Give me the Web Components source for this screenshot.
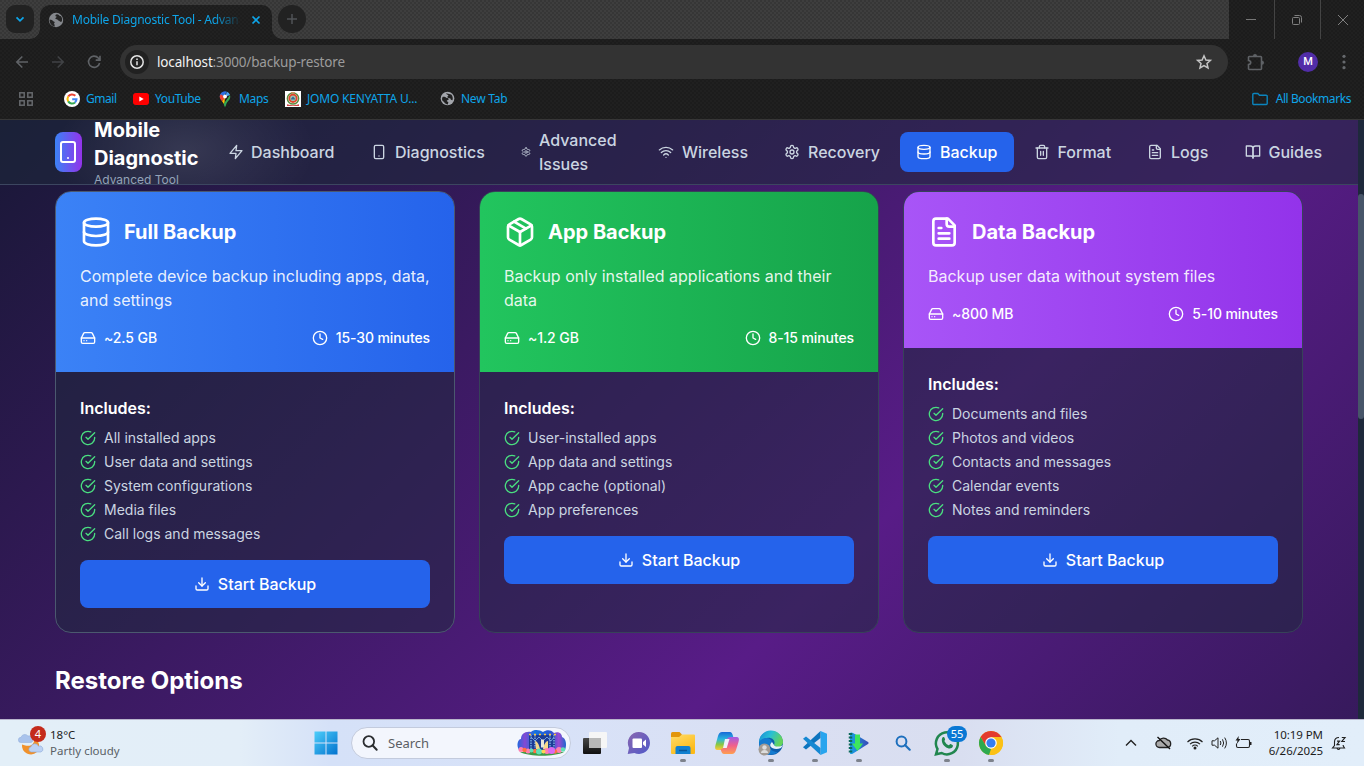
<!DOCTYPE html>
<html lang="en">
<head>
<meta charset="utf-8">
<title>Mobile Diagnostic Tool - Advanced</title>
<style>
html,body{margin:0;height:100%;overflow:hidden}
body{display:flex;flex-direction:column;width:1364px;height:766px;background:#1f1f1f;font-family:"Noto Sans","Open Sans",sans-serif}
</style>
</head>
<body>
<browser-chrome></browser-chrome>
<app-page></app-page>
<task-bar></task-bar>
<script>
const define = (name, css, html) => customElements.define(name, class extends HTMLElement {
  constructor() {
    super();
    this.attachShadow({ mode: 'open' }).innerHTML = `<style>*{box-sizing:border-box}${css}</style>${typeof html === 'function' ? html(this) : html}`;
  }
});

/* ---------- line icons ---------- */
const LINE = {
  zap: '<polygon points="13 2 3 14 12 14 11 22 21 10 12 10 13 2"/>',
  phone: '<rect x="5" y="2" width="14" height="20" rx="2"/><path d="M12 18h.01"/>',
  gear: '<path d="M12.22 2h-.44a2 2 0 0 0-2 2v.18a2 2 0 0 1-1 1.73l-.43.25a2 2 0 0 1-2 0l-.15-.08a2 2 0 0 0-2.73.73l-.22.38a2 2 0 0 0 .73 2.73l.15.1a2 2 0 0 1 1 1.72v.51a2 2 0 0 1-1 1.74l-.15.09a2 2 0 0 0-.73 2.73l.22.38a2 2 0 0 0 2.73.73l.15-.08a2 2 0 0 1 2 0l.43.25a2 2 0 0 1 1 1.73V20a2 2 0 0 0 2 2h.44a2 2 0 0 0 2-2v-.18a2 2 0 0 1 1-1.73l.43-.25a2 2 0 0 1 2 0l.15.08a2 2 0 0 0 2.73-.73l.22-.39a2 2 0 0 0-.73-2.73l-.15-.08a2 2 0 0 1-1-1.74v-.5a2 2 0 0 1 1-1.74l.15-.09a2 2 0 0 0 .73-2.73l-.22-.38a2 2 0 0 0-2.73-.73l-.15.08a2 2 0 0 1-2 0l-.43-.25a2 2 0 0 1-1-1.73V4a2 2 0 0 0-2-2z"/><circle cx="12" cy="12" r="3"/>',
  wifi: '<path d="M12 20h.01"/><path d="M2 8.82a15 15 0 0 1 20 0"/><path d="M5 12.859a10 10 0 0 1 14 0"/><path d="M8.5 16.429a5 5 0 0 1 7 0"/>',
  database: '<ellipse cx="12" cy="5" rx="9" ry="3"/><path d="M3 5V19A9 3 0 0 0 21 19V5"/><path d="M3 12A9 3 0 0 0 21 12"/>',
  trash: '<path d="M3 6h18"/><path d="M19 6v14c0 1-1 2-2 2H7c-1 0-2-1-2-2V6"/><path d="M8 6V4c0-1 1-2 2-2h4c1 0 2 1 2 2v2"/><path d="M10 11v6M14 11v6"/>',
  file: '<path d="M15 2H6a2 2 0 0 0-2 2v16a2 2 0 0 0 2 2h12a2 2 0 0 0 2-2V7Z"/><path d="M14 2v4a2 2 0 0 0 2 2h4"/><path d="M10 9H8M16 13H8M16 17H8"/>',
  book: '<path d="M2 3h6a4 4 0 0 1 4 4v14a3 3 0 0 0-3-3H2z"/><path d="M22 3h-6a4 4 0 0 0-4 4v14a3 3 0 0 1 3-3h7z"/>',
  box: '<path d="m7.5 4.27 9 5.15"/><path d="M21 8a2 2 0 0 0-1-1.73l-7-4a2 2 0 0 0-2 0l-7 4A2 2 0 0 0 3 8v8a2 2 0 0 0 1 1.73l7 4a2 2 0 0 0 2 0l7-4A2 2 0 0 0 21 16Z"/><path d="m3.3 7 8.7 5 8.7-5"/><path d="M12 22V12"/>',
  drive: '<line x1="22" x2="2" y1="12" y2="12"/><path d="M5.45 5.11 2 12v6a2 2 0 0 0 2 2h16a2 2 0 0 0 2-2v-6l-3.45-6.89A2 2 0 0 0 16.76 4H7.24a2 2 0 0 0-1.79 1.11z"/><path d="M6 16h.01M10 16h.01"/>',
  clock: '<circle cx="12" cy="12" r="10"/><polyline points="12 6 12 12 16 14"/>',
  check: '<path d="M22 11.08V12a10 10 0 1 1-5.93-9.14"/><path d="m9 11 3 3L22 4"/>',
  download: '<path d="M21 15v4a2 2 0 0 1-2 2H5a2 2 0 0 1-2-2v-4"/><polyline points="7 10 12 15 17 10"/><line x1="12" x2="12" y1="15" y2="3"/>',
};
define('line-icon', ':host{display:block;flex:none;line-height:0}svg{display:block}',
  el => { const s = el.getAttribute('size') || 16;
    return `<svg width="${s}" height="${s}" viewBox="0 0 24 24" fill="none" stroke="currentColor" stroke-width="2" stroke-linecap="round" stroke-linejoin="round">${LINE[el.getAttribute('name')]}</svg>`; });

/* ---------- colour glyphs: [width, height, viewBox, content] ---------- */
const GLYPH = {
  chevron: [12, 12, '0 0 12 12', '<path d="M2.5 4.3 6 7.8l3.500-3.500" fill="none" stroke="#0ea5e9" stroke-width="1.8"/>'],
  globe: [16, 16, '0 0 16 16', '<circle cx="8" cy="8" r="7.200" fill="#85888d"/><path d="M1.500 7.500c2 .2 3 .8 3.700 1.700 1 .2 1.600.6 1.500 1.500-.8.400-.7 1-.2 1.700l.3 2.200C3.500 14 1.400 11 1.500 7.500zM7.500 3c-.3 1 .3 1.500 1.200 1.600-.2 1.100-1.200 1-1.400 2.100.8.700 2 .300 2.600 1.300.500.800 1.700.500 2 1.400.3.800 1.500.3 2-.2.500-1.800.1-4-1.200-5.200-.9.300-1.400-.1-1.800-.9C9.700 2 8.300 2 7.500 3z" fill="#242424"/>'],
  globeLight: [15, 15, '0 0 16 16', '<circle cx="8" cy="8" r="7.300" fill="#a3a6ac"/><path d="M3 6.200c2-.1 2.700.1 3.600 1 1.200.2 2.200.3 2.700 1.300-.1 1-.9 1.400-1.900 1.400-.3 1.200.6 1.600 1.500 1.900l-.5 2.500C4.800 14 5 11.800 3.200 11 1.800 9.500 1.900 7.500 3 6.200zM6.500 2.500 12 3.600c1.600 1.500 2 4.300 1.300 6.200-1.500-.1-2.300-.8-2.300-2-1.500-.2-3-.4-3.300-1.400.1-.9 1.300-1 1.200-1.900C7.900 4 7 4 6.500 2.500z" fill="#202020"/>'],
  close: [10, 10, '0 0 10 10', '<path d="m1.500 1.500 7 7m0-7-7 7" stroke="#0ea5e9" stroke-width="1.700"/>'],
  plus: [12, 12, '0 0 12 12', '<path d="M6 1v10M1 6h10" stroke="#505357" stroke-width="1.500"/>'],
  back: [14, 14, '0 0 14 14', '<path d="M13 7H2m5.300-5.500L1.800 7l5.500 5.500" fill="none" stroke="#5f6266" stroke-width="1.600"/>'],
  forward: [14, 14, '0 0 14 14', '<path d="M1 7h11M6.700 1.500 12.200 7l-5.500 5.500" fill="none" stroke="#404245" stroke-width="1.600"/>'],
  reload: [14, 14, '0 0 14 14', '<path d="M12.600 8A5.600 5.600 0 1 1 11.300 3L13 4.800M13 .8v4.300H8.700" fill="none" stroke="#5f6266" stroke-width="1.600"/>'],
  info: [16, 16, '0 0 16 16', '<circle cx="8" cy="8" r="6.200" fill="none" stroke="#e3e3e3" stroke-width="1.500"/><path d="M8 7.200v4M8 4.500v1.400" stroke="#e3e3e3" stroke-width="1.500"/>'],
  star: [16, 16, '0 0 16 16', '<path d="m8 1.800 1.900 4.200 4.500.4-3.400 3 1 4.500-4-2.400-4 2.400 1-4.500-3.400-3 4.500-.4z" fill="none" stroke="#c4c4c4" stroke-width="1.500"/>'],
  puzzle: [17, 17, '0 0 17 17', '<path d="M2.300 2.500h4.200M2.300 2.500q-.8 0-.8.800v3.200c3 .4 3 3.600 0 4v4q0 1 1 1h11q1 0 1-1v-11q0-1-1-1H2.300" fill="none" stroke="#5f6266" stroke-width="1.600"/><path d="M6 2a2 2 0 0 1 4 0zM15 6.700a2 2 0 0 1 0 4z" fill="#5f6266"/>'],
  dots: [4, 16, '0 0 4 16', '<g fill="#66696d"><circle cx="2" cy="2.300" r="1.600"/><circle cx="2" cy="8" r="1.600"/><circle cx="2" cy="13.700" r="1.600"/></g>'],
  min: [10, 10, '0 0 10 10', '<path d="M0 4.500h10" stroke="#777" />'],
  max: [10, 10, '0 0 10 10', '<rect x=".5" y="2.500" width="7" height="7" rx="1" fill="none" stroke="#808080"/><path d="M2.500.5h5a2 2 0 0 1 2 2v5" fill="none" stroke="#808080"/>'],
  x: [10, 10, '0 0 10 10', '<path d="m0 0 10 10m0-10L0 10" stroke="#808080"/>'],
  apps: [14, 14, '0 0 14 14', '<g fill="none" stroke="#66696d" stroke-width="1.500"><rect x=".8" y=".8" width="4.400" height="4.400"/><rect x="8.800" y=".8" width="4.400" height="4.400"/><rect x=".8" y="8.800" width="4.400" height="4.400"/><rect x="8.800" y="8.800" width="4.400" height="4.400"/></g>'],
  google: [16, 16, '0 0 16 16', '<circle cx="8" cy="8" r="8" fill="#fff"/><g fill="none" stroke-width="2"><path d="M4.200 5.600A4.500 4.500 0 0 1 11.300 4.800" stroke="#ea4335"/><path d="M4.200 5.600a4.600 4.600 0 0 0 0 4.800" stroke="#fbbc05"/><path d="M4.200 10.400a4.500 4.500 0 0 0 6.800 1" stroke="#34a853"/><path d="M11 11.400a4.400 4.400 0 0 0 1.500-3.200H8.200" stroke="#4285f4"/></g>'],
  youtube: [16, 12, '0 0 16 12', '<rect width="16" height="12" rx="3" fill="#f00"/><path d="m6.300 3.500 4.400 2.500-4.400 2.500z" fill="#fff"/>'],
  maps: [12, 16, '0 0 12 16', '<path d="M6 .3A5.300 5.300 0 0 0 .7 5.600L3 7.500 8 .7A5 5 0 0 0 6 .3z" fill="#2a6fe3"/><path d="M8 .7a5.300 5.300 0 0 1 3 3.200L6 6z" fill="#4aa3f5"/><path d="M.7 5.600C.8 8 2 9 3.100 10.500L6 6.500 2 3.200q-1.200 1-1.300 2.400z" fill="#ea4335"/><path d="M6 6 3.100 10.500C4 11.700 5 12.500 5.400 14z" fill="#fbbc04"/><path d="M11 3.900c1 4-1.500 5.500-2.900 7.500C7 13 6.800 15.800 6 15.800s-.7-1.500-1.300-3z" fill="#34a853"/><circle cx="6" cy="5.500" r="1.900" fill="#fff"/>'],
  jomo: [16, 16, '0 0 16 16', '<path fill="#fff" d="M0 0h16v16H0z"/><circle cx="8" cy="7.500" r="5.600" fill="none" stroke="#5c8a3c" stroke-width="1.500"/><circle cx="8" cy="7.300" r="3.700" fill="#9ec3b0" stroke="#e0452c" stroke-width="1.800"/><path d="M6 8.500h4v-1L8 5.500l-2 2z" fill="#356b95"/><path d="M2 13.300q6 2 12 0v1.700H2z" fill="#c44"/><path d="M6 1h4v1.500H6z" fill="#c96"/>'],
  folder: [16, 14, '0 0 16 14', '<path d="M.8 2.500A1 1 0 0 1 1.800 1.500h4l1.700 1.700h6.700a1 1 0 0 1 1 1v7.300a1 1 0 0 1-1 1H1.800a1 1 0 0 1-1-1z" fill="none" stroke="#0b84bd" stroke-width="1.400"/>'],
  weather: [26, 26, '0 0 26 26', '<path d="M4 14.500a9 9 0 0 0 15 7.500 9 9 0 0 0-3-14c1 6-3 10-12 6.500z" fill="#f0912b"/><path d="M3 12.500a2.600 2.600 0 0 1 0-5.200A4 4 0 0 1 10 6a3 3 0 0 1 4 3 2 2 0 0 1-1 3.500z" fill="#a9c3ec" stroke="#8eabd9" stroke-width=".5"/><path d="M13 22a2.700 2.700 0 0 1 0-5.300 4 4 0 0 1 7.500-.5 3 3 0 0 1 2.500 5.800z" fill="#bcd2f4" stroke="#8eabd9" stroke-width=".6"/>'],
  windows: [24, 24, '0 0 24 24', '<defs><linearGradient id="w" gradientUnits="userSpaceOnUse" x2="24" y2="24"><stop stop-color="#4fd0fb"/><stop offset="1" stop-color="#0070cd"/></linearGradient></defs><path d="M.5.5h11v11H.5zm12 0h11v11h-11zm-12 12h11v11H.5zm12 0h11v11h-11z" fill="url(#w)"/>'],
  search: [16, 16, '0 0 16 16', '<circle cx="6.800" cy="6.500" r="5.300" fill="none" stroke="#2b2d30" stroke-width="1.800"/><path d="m10.700 10.500 4 4.300" stroke="#2b2d30" stroke-width="2" stroke-linecap="round"/>'],
  party: [50, 26, '0 0 50 26', '<defs><linearGradient id="p"><stop stop-color="#2368df"/><stop offset=".15" stop-color="#8349d3"/><stop offset=".35" stop-color="#1672df"/><stop offset=".7" stop-color="#2c55d2"/><stop offset=".85" stop-color="#9a4bd3"/><stop offset="1" stop-color="#1c65ce"/></linearGradient></defs><path d="M2 20C-1 15 1 9 4 9 4 4 8 1 14 2c3-3 9-2 12 0 4-3 9-2 11 1 5-2 8 1 8 4 4 1 5 8 3 13z" fill="url(#p)"/><path d="M12 5h26v15H12z" fill="#1d3c95"/><path d="M14 5v15M18 5v13M33 5v13M37 5v15" stroke="#8fc3f5" stroke-width="1.200" stroke-dasharray="1.500 1"/><path d="m14 7 4 4 4-4 4 4 4-4 4 4 3-4" stroke="#7fb0ee" fill="none" stroke-width=".8"/><path d="M12 4.500h2m3 0h2m3 0h2m3 0h2m3 0h2m3 0h2" stroke="#ffc93c" stroke-width="1.600"/><path d="M18 11c2 0 4 3 5 8h-4zm13 0c-2 0-4 3-5 8h5z" fill="#f6d98a"/><path d="M24 9.500h3v8h-3z" fill="#e8e6da"/><path d="M3 22c10 5 34 5 44 0z" fill="#3d9b46"/><g fill="#ff7eb0"><circle cx="4" cy="19.500" r="2.500"/><circle cx="11" cy="21" r="2.500"/><circle cx="30" cy="21" r="3"/><circle cx="42" cy="20" r="3"/></g><g fill="#ff7043"><circle cx="7.500" cy="20" r="2.200"/><circle cx="18" cy="21" r="2.200"/><circle cx="38" cy="21.500" r="2.200"/></g><g fill="#5fe0b4"><circle cx="22" cy="21.500" r="3"/><circle cx="14.500" cy="20.500" r="2"/><circle cx="46" cy="19.500" r="2.300"/></g><circle cx="34.500" cy="20.500" r="3.500" fill="#dc6af2"/><circle cx="26.500" cy="21.500" r="2" fill="#ffd453"/>'],
  taskview: [26, 24, '0 0 26 24', '<defs><linearGradient id="t" y2="1" x2="0"><stop stop-color="#474747"/><stop offset="1" stop-color="#0f0f0f"/></linearGradient></defs><rect x="7" y="1" width="18" height="16" rx="1" fill="#f6f6f6"/><rect x="1" y="7" width="18" height="16" rx="1" fill="url(#t)"/><path d="M7 7h12v10H7z" fill="#b8b8b8"/>'],
  chat: [24, 24, '0 0 24 24', '<defs><linearGradient id="c" x2="1" y2="1"><stop stop-color="#8a67b0"/><stop offset="1" stop-color="#5059c9"/></linearGradient></defs><path d="M12 1a11 11 0 1 1-4.600 21L.7 23 2 17A11 11 0 0 1 12 1z" fill="url(#c)"/><rect x="5.500" y="7.500" width="9.500" height="9.500" rx="1" fill="#fff"/><path d="m16 11 3-2.500v7.500l-3-2.500z" fill="#fff"/>'],
  explorer: [26, 24, '0 0 26 24', '<defs><linearGradient id="e" x2=".6" y2="1"><stop stop-color="#ffdc69"/><stop offset="1" stop-color="#fdb915"/></linearGradient></defs><path d="M1 2.500Q1 1 2.500 1h7L12 3.500V8H1z" fill="#e2960c"/><path d="M1 6h8l3-2.500h12q1 0 1 1V22q0 1-1 1H2q-1 0-1-1z" fill="url(#e)"/><path d="M5.500 23v-6q0-2 2-2h11q2 0 2 2v6z" fill="#1180d0"/><path d="M9 19.500h8" stroke="#0a5799" stroke-width="1.500"/>'],
  copilot: [26, 24, '0 0 26 24', '<defs><linearGradient id="a" x2="0" y2="1"><stop stop-color="#1769d8"/><stop offset=".4" stop-color="#2bb8dd"/><stop offset=".7" stop-color="#8dc840"/><stop offset="1" stop-color="#ffc93c"/></linearGradient><linearGradient id="b" x2="0" y2="1"><stop stop-color="#a05ce6"/><stop offset=".5" stop-color="#f0608c"/><stop offset="1" stop-color="#ff9f4f"/></linearGradient></defs><path d="M8 1h8q2 0 3 4l.5 2h-3q-2 0-3 3l-2 6q-1 3-4 3H3.500Q0 19 1.500 14L4 5q1.200-4 4-4z" fill="url(#a)"/><path d="M18 23h-8q-2 0-3-3.500l-.3-1.500q2.800 0 3.800-3l2-6q1-3 4-3h6Q26 6 24.500 11L22 19q-1.200 4-4 4z" fill="url(#b)"/><path d="M11 8h4.500l-2.800 9H9z" fill="#f0f2fb"/>'],
  edge: [26, 26, '0 0 26 26', '<defs><linearGradient id="g" x2="1" y2=".4"><stop stop-color="#1888d6"/><stop offset=".5" stop-color="#29bfd5"/><stop offset="1" stop-color="#65d35b"/></linearGradient></defs><circle cx="13" cy="13" r="12" fill="#0d5cab"/><path d="M1 13A12 12 0 0 1 25 12c0 6-8 6-9 3 2-4-2-8-7-7-4 .5-7 3-8 5z" fill="url(#g)"/><path d="M1 13c1-6 12-7 13-1-5 3-2 10 6 10-8 6-19 1-19-9z" fill="#147bd0"/><path d="M14 12c-5 4 1 9 9 6l2-3c-3 2-8 2-9 0z" fill="#e6f1fa"/><circle cx="6.500" cy="19.500" r="6" fill="#a29b94"/><circle cx="6.500" cy="17.500" r="2.200" fill="#ddd"/><path d="M2.800 23q.5-3 3.700-3t3.700 3z" fill="#ddd"/>'],
  vscode: [26, 24, '0 0 26 24', '<path d="M18.500 0 25 2.800v18.400L18.500 24z" fill="#29a5ee"/><path d="M18.500 0v7L4 18.500l-3-2.300z" fill="#0d74be"/><path d="M18.500 24v-7L4 5.500 1 7.800z" fill="#1688d2"/>'],
  play: [22, 24, '0 0 22 24', '<defs><linearGradient id="v"><stop stop-color="#18a4e8"/><stop offset="1" stop-color="#3849b5"/></linearGradient></defs><path d="M2 2q1-1 3 0l15 9q1.500 1 0 2L5 22.500q-2 1-3 0z" fill="url(#v)"/><path d="M2.500 2v21" stroke="#0d6b5d" stroke-width="3.500" stroke-dasharray="2 1.500"/><path d="M7 3.500h5v9h3L9.500 20 4 12.500h3z" fill="#3de65c"/>'],
  find: [16, 16, '0 0 16 16', '<circle cx="6.500" cy="6.500" r="4.900" fill="none" stroke="#1d6fbd" stroke-width="2"/><path d="m10 10 4.700 4.700" stroke="#1d6fbd" stroke-width="2.200" stroke-linecap="round"/>'],
  whatsapp: [26, 26, '0 0 26 26', '<path d="M2 24.300 3.500 19a11 11 0 1 1 4.200 4z" fill="none" stroke="#21864f" stroke-width="2.500"/><path d="M8.500 7.500c1.500-1 2 0 2.500 1.500.5 1-.8 1.700-.5 2.200a9 9 0 0 0 4 4c.8.300 1.300-1.500 2-1.200 1.500.7 3 1 2.300 2.600C17.500 19.500 14 19 11 16.500S7 10 8.500 7.500z" fill="#21864f"/>'],
  chrome: [24, 24, '0 0 24 24', '<circle cx="12" cy="12" r="12" fill="#fbc116"/><path d="M1.600 6A12 12 0 0 1 22.400 6H12L7 15z" fill="#e33b2e"/><path d="M1.600 6 7 15l5 3-2 5.900A12 12 0 0 1 1.600 6z" fill="#2da94f"/><path d="M22.400 6H12v3l5 6-5.500 9A12 12 0 0 0 22.400 6z" fill="#fbc116"/><circle cx="12" cy="12" r="5.800" fill="#fff"/><circle cx="12" cy="12" r="4.600" fill="#367ef0"/>'],
  up: [12, 8, '0 0 12 8', '<path d="m1 6.500 5-5 5 5" fill="none" stroke="#222" stroke-width="1.400"/>'],
  cloud: [17, 14, '0 0 17 14', '<path d="M4.500 11.500a3.500 3.500 0 0 1-.2-7A5 5 0 0 1 12.500 4a3.800 3.800 0 0 1 0 7.500z" fill="#a9a9a9" stroke="#222" stroke-width="1.300"/><path d="m2.500 1 12.500 12" stroke="#111" stroke-width="1.400"/>'],
  wlan: [16, 13, '0 0 16 13', '<g fill="none" stroke="#222" stroke-width="1.100"><path d="M.5 5a10.500 10.500 0 0 1 15 0M3 7.200a7 7 0 0 1 10 0M5.200 9.300a4 4 0 0 1 5.600 0"/></g><circle cx="8" cy="11" r="1.500" fill="#222"/>'],
  sound: [17, 14, '0 0 17 14', '<path d="M1 4.800h2.500L7 1.800v10.400L3.500 9.200H1z" fill="none" stroke="#222"/><path d="M9.300 5q1.200 2 0 4M11.500 3.300q2.300 3.700 0 7.400M13.700 1.600q3.400 5.400 0 10.800" fill="none" stroke="#222"/>'],
  battery: [17, 14, '0 0 17 14', '<path d="M6 3.500h7q1.500 0 1.500 1.500v5q0 1.500-1.500 1.500H3Q1.500 11.500 1.500 10V7.500" fill="none" stroke="#222" stroke-width="1.100"/><path d="M15 6v3h1.500V6zM3.700 0 .5 4.500h2L1.800 8l3.700-5h-2z" fill="#222"/>'],
  bell: [16, 15, '0 0 16 15', '<path d="M8 1.500Q3.500 1.500 3.500 6v3.500L1.500 12h12l-1.300-2.200V9M6 12.500q1.500 2 3 0" fill="none" stroke="#222" stroke-width="1.100"/><path d="M6 5.200h2.500L6 8.700h2.700M10.800 1.500H14l-3.200 4H14" fill="none" stroke="#222" stroke-width="1.200"/>'],
};
define('color-glyph', ':host{display:block;flex:none;line-height:0}svg{display:block;overflow:visible}',
  el => { const [w, h, v, c] = GLYPH[el.getAttribute('name')]; return `<svg width="${w}" height="${h}" viewBox="${v}">${c}</svg>`; });

/* ---------- browser frame ---------- */
const weave = 'radial-gradient(circle at 1px 1px,#00000030 .6px,transparent .9px) 0 0/4px 4px,radial-gradient(circle at 1px 1px,#00000030 .6px,transparent .9px) 2px 2px/4px 4px';
define('book-mark', ':host{display:flex;align-items:center;height:16px;gap:var(--g,6px);font-size:12px;color:#0ea5e9;white-space:nowrap}span{letter-spacing:var(--ls,-.3px)}',
  el => `<color-glyph name="${el.getAttribute('icon')}"></color-glyph><span><slot></slot></span>`);
define('browser-chrome', `
:host{display:block;height:120px;flex:none;background:${weave},#202020;border-bottom:1px solid #373737;box-sizing:border-box}
.strip{display:flex;height:39px;background:${weave},#3e3e3e}
.drop{width:28px;height:28px;border-radius:9px;background:#222;margin:5px 6px 0;display:grid;place-items:center}
.tab{position:relative;width:232px;height:34px;margin-top:5px;background:${weave},#212121;border-radius:10px 10px 0 0;display:flex;align-items:center;padding:0 11px 5px 8px}
.tab:before,.tab:after{content:"";position:absolute;bottom:0;width:10px;height:10px}
.tab:before{right:100%;background:radial-gradient(circle at 0 0,transparent 9.500px,#202020 10px)}
.tab:after{left:100%;background:radial-gradient(circle at 100% 0,transparent 9.500px,#202020 10px)}
.ttl{margin-left:8px;width:172px;margin-right:-5px;white-space:nowrap;font-size:12px;letter-spacing:-.22px;color:#0ea5e9;-webkit-mask:linear-gradient(90deg,#000 142px,transparent 170px)}
.tab color-glyph:last-child{margin-left:auto}
.new{width:28px;height:28px;border-radius:50%;background:#222;margin:5px 0 0 6px;display:grid;place-items:center}
.win{margin-left:auto;display:flex;background:${weave},#202020}
.win div{width:46px;display:grid;place-items:center;border-left:1px solid #444}
.win div:first-child{border:0;width:45px}.win div:last-child{width:44px}
.win div:nth-child(-n+2){padding-right:2px}
.bar{display:flex;align-items:center;height:46px;padding-left:15px}
.url{display:flex;align-items:center;margin-left:19px;width:1108px;height:34px;border-radius:17px;background:#333;padding:0 16px 0 5px;font-size:13.500px;color:#9c9c9c}
.url i{width:24px;height:24px;border-radius:50%;background:#212121;display:grid;place-items:center;margin-right:8px}
.url i color-glyph{margin:0}
.url b{font-weight:400;color:#f2f2f2}.url u{text-decoration:none;letter-spacing:-.16px}.url .star{margin-left:auto}
.av{width:20px;height:20px;border-radius:50%;background:#512da8;color:#fff;font:500 11px/20px Roboto,sans-serif;text-align:center;margin:0 22px 0 34px}
.marks{display:flex;align-items:center;height:27px;padding-left:19px}
`, `
<div class="strip"><div class="drop"><color-glyph name="chevron"></color-glyph></div>
<div class="tab"><color-glyph name="globe"></color-glyph><span class="ttl">Mobile Diagnostic Tool - Advan</span><color-glyph name="close"></color-glyph></div>
<div class="new"><color-glyph name="plus"></color-glyph></div>
<div class="win"><div><color-glyph name="min"></color-glyph></div><div><color-glyph name="max"></color-glyph></div><div><color-glyph name="x"></color-glyph></div></div></div>
<div class="bar"><color-glyph name="back"></color-glyph><color-glyph name="forward" style="margin-left:22px"></color-glyph><color-glyph name="reload" style="margin-left:22px"></color-glyph>
<div class="url"><i><color-glyph name="info"></color-glyph></i><u><b>localhost</b>:3000/backup-restore</u><color-glyph class="star" name="star"></color-glyph></div>
<color-glyph name="puzzle" style="margin-left:19px"></color-glyph><div class="av">M</div><color-glyph name="dots" style="margin-left:2px"></color-glyph></div>
<div class="marks"><color-glyph name="apps"></color-glyph>
<book-mark icon="google" style="margin-left:31px;width:53px;--ls:-.45px">Gmail</book-mark><book-mark icon="youtube" style="margin-left:16px;width:68px;--ls:-.4px">YouTube</book-mark>
<book-mark icon="maps" style="margin-left:18px;width:49px;--g:8px;--ls:-.35px">Maps</book-mark><book-mark icon="jomo" style="margin-left:17px;width:134px;--ls:-.2px">JOMO KENYATTA U...</book-mark>
<book-mark icon="globeLight" style="margin-left:21px;--ls:-.25px">New Tab</book-mark><book-mark icon="folder" style="margin-left:auto;margin-right:13px;--g:8px;--ls:-.42px">All Bookmarks</book-mark></div>`);

/* ---------- application ---------- */
define('nav-item', `
:host{display:flex;align-items:center;height:40px;padding:0 0 0 16px;gap:8px;border-radius:8px;font-weight:500;font-size:16px;line-height:24px;color:#cbd5e1;flex:none;box-sizing:border-box}
:host([active]){background:#2563eb;color:#fff}
span{width:var(--tw,auto);margin-left:var(--nudge,0)}`,
  el => `<line-icon name="${el.getAttribute('icon')}" size="${el.getAttribute('size') || 16}"></line-icon><span><slot></slot></span>`);
define('app-header', `
:host{display:flex;align-items:center;height:65px;flex:none;box-sizing:border-box;padding-left:55px;border-bottom:1px solid #3c4660;background:radial-gradient(ellipse 130px 75px at 185px 30px,#ffffff1a,#ffffff0c 50%,transparent),rgba(30,41,59,.55)}
.logo{width:27px;height:40px;border-radius:8px;background:linear-gradient(90deg,#3b82f6,#9333ea);display:flex;align-items:center;color:#fff;flex:none;padding-left:1px}
.name{margin-left:12px;width:118px;flex:none}
b{display:block;font-size:20px;line-height:28px;font-weight:700;color:#fff;width:106px}
small{display:block;font-size:12px;line-height:16px;color:#94a3b8}
nav{display:flex;align-items:center;gap:4px}
nav-item{width:var(--w)}`, `
<div class="logo"><line-icon name="phone" size="24"></line-icon></div><div class="name"><b>Mobile Diagnostic</b><small>Advanced Tool</small></div>
<nav><nav-item icon="zap" style="--w:139px;--nudge:-1px">Dashboard</nav-item><nav-item icon="phone" style="--w:146px">Diagnostics</nav-item>
<nav-item icon="gear" size="10" style="--w:133px;--tw:90px">Advanced Issues</nav-item><nav-item icon="wifi" style="--w:122px">Wireless</nav-item>
<nav-item icon="gear" style="--w:128px">Recovery</nav-item><nav-item icon="database" active style="--w:114px">Backup</nav-item>
<nav-item icon="trash" style="--w:109px;--nudge:-.5px">Format</nav-item><nav-item icon="file" style="--w:94px">Logs</nav-item><nav-item icon="book" style="--w:109px;--nudge:-.5px">Guides</nav-item></nav>`);
define('check-item', ':host{display:flex;align-items:center;gap:8px;font-size:14px;line-height:20px;color:#cbd5e1}line-icon{color:#4ade80}',
  '<line-icon name="check"></line-icon><span><slot></slot></span>');
define('backup-card', `
:host{display:flex;flex-direction:column;border:1px solid var(--line,#374259);border-radius:16px;overflow:hidden;box-sizing:border-box;background:rgba(30,41,59,.5)}
header{padding:24px;color:#fff;background:linear-gradient(90deg,var(--from),var(--to))}
h3{display:flex;align-items:center;gap:12px;margin:0 0 16px;font-size:20px;line-height:28px;height:32px;font-weight:700}
p{margin:0 0 16px;font-size:16px;line-height:24px;color:rgba(255,255,255,.9)}
.meta{display:flex;justify-content:space-between;font-size:14px;line-height:20px;font-weight:500;letter-spacing:-.1px}
.meta span{display:flex;align-items:center;gap:8px}
section{padding:24px}
h4{margin:0 0 8px;font-size:16px;line-height:24px;font-weight:600;color:#fff}
.list{display:flex;flex-direction:column;gap:4px;margin-bottom:16px}
.btn{display:flex;align-items:center;justify-content:center;gap:8px;height:48px;border-radius:8px;background:#2563eb;color:#fff;font-size:16px;font-weight:500}`,
  el => { const a = n => el.getAttribute(n); return `
<header><h3><line-icon name="${a('icon')}" size="32"></line-icon>${a('label')}</h3><p>${a('text')}</p>
<div class="meta"><span><line-icon name="drive"></line-icon>${a('space')}</span><span><line-icon name="clock"></line-icon>${a('time')}</span></div></header>
<section><h4>Includes:</h4><div class="list"><slot></slot></div><div class="btn"><line-icon name="download"></line-icon>Start Backup</div></section>`; });
const card = (icon, label, text, space, time, vars, items) =>
  `<backup-card icon="${icon}" label="${label}" text="${text}" space="${space}" time="${time}" style="${vars}">${items.map(i => `<check-item>${i}</check-item>`).join('')}</backup-card>`;
define('app-page', `
:host{display:flex;height:599px;flex:none;overflow:hidden;font-family:Inter,sans-serif;background:#1e293b}
.view{width:1358px;height:599px;overflow:hidden;background:linear-gradient(135deg,#0f172a,#581c87 50%,#0f172a) 0 -197px/1358px 1600px no-repeat}
.cards{display:grid;grid-template-columns:repeat(3,400px);gap:24px;padding:6px 0 0 55px}
h2{margin:32px 0 0 55px;font-size:24px;line-height:32px;font-weight:700;color:#fff}
.track{width:6px}.thumb{margin-top:74px;height:225px;border-radius:3px;background:#475569}`, `
<div class="view"><app-header></app-header><div class="cards">
${card('database', 'Full Backup', 'Complete device backup including apps, data, and settings', '~2.5 GB', '15-30 minutes', '--from:#3b82f6;--to:#2563eb;--line:#4b596f', ['All installed apps', 'User data and settings', 'System configurations', 'Media files', 'Call logs and messages'])}
${card('box', 'App Backup', 'Backup only installed applications and their data', '~1.2 GB', '8-15 minutes', '--from:#22c55e;--to:#16a34a', ['User-installed apps', 'App data and settings', 'App cache (optional)', 'App preferences'])}
${card('file', 'Data Backup', 'Backup user data without system files', '~800 MB', '5-10 minutes', '--from:#a855f7;--to:#9333ea', ['Documents and files', 'Photos and videos', 'Contacts and messages', 'Calendar events', 'Notes and reminders'])}
</div><h2>Restore Options</h2></div><div class="track"><div class="thumb"></div></div>`);

/* ---------- taskbar ---------- */
define('task-app', `
:host{position:relative;display:grid;place-items:center;width:44px;height:46px;flex:none}
:host([run]):after{content:"";position:absolute;bottom:4px;left:19px;width:6px;height:3px;border-radius:2px;background:#7d828c}
.n{position:absolute;left:22px;top:6px;width:20px;height:16px;border-radius:8px;background:#0a78d4;color:#fff;font-size:11px;line-height:16px;text-align:center}`,
  el => `<color-glyph name="${el.getAttribute('icon')}"></color-glyph>${el.hasAttribute('count') ? `<div class="n">${el.getAttribute('count')}</div>` : ''}`);
define('task-bar', `
:host{display:flex;align-items:center;height:47px;flex:none;box-sizing:border-box;border-top:1px solid #b8b5cc;background:linear-gradient(90deg,#e3eff8 0,#e3eef8 240px,#d5e1f8 330px,#d8e2f8 560px,#dadff2 800px,#d9def0 960px,#e1edf9 1120px,#e2eefa);font-size:11.500px;color:#1c1c1c}
.w{position:relative;display:flex;align-items:center;margin-left:18px;width:286px;gap:6px}
.w div{line-height:16px;white-space:nowrap;margin-top:-1px}.w small{font-size:11.500px;color:#5a5f66;display:block}
.n{position:absolute;left:12px;top:-2px;width:16px;height:16px;border-radius:50%;background:#c42b1c;color:#fff;font-size:11px;line-height:16px;text-align:center}
.s{display:flex;align-items:center;width:220px;height:32px;border-radius:16px;background:#f3f6fd;border:1px solid #c3cbdd;margin:0 2px 0 3px;padding:0 3px 0 10px;font-size:13px;color:#5b5e64}
.s span{margin-left:10px;flex:1}
.tray{display:flex;align-items:center;margin-left:auto}
.t{width:70px;text-align:right;line-height:16px;letter-spacing:-.05px;white-space:nowrap;margin:-1px 0 0 1px}`, `
<div class="w"><color-glyph name="weather"></color-glyph><i class="n" style="font-style:normal">4</i><div>18°C<small>Partly cloudy</small></div></div>
<task-app icon="windows"></task-app><div class="s"><color-glyph name="search"></color-glyph><span>Search</span><color-glyph name="party"></color-glyph></div>
<task-app icon="taskview"></task-app><task-app icon="chat"></task-app><task-app icon="explorer" run></task-app><task-app icon="copilot"></task-app><task-app icon="edge" run></task-app><task-app icon="vscode" run></task-app><task-app icon="play" run></task-app><task-app icon="find"></task-app><task-app icon="whatsapp" run count="55"></task-app><task-app icon="chrome" run></task-app>
<div class="tray"><color-glyph name="up"></color-glyph><color-glyph name="cloud" style="margin-left:18px"></color-glyph><color-glyph name="wlan" style="margin-left:15px"></color-glyph><color-glyph name="sound" style="margin-left:8px"></color-glyph><color-glyph name="battery" style="margin-left:7px"></color-glyph><div class="t">10:19 PM<br>6/26/2025</div><color-glyph name="bell" style="margin:0 17px 0 8px"></color-glyph></div>`);
</script>
</body>
</html>
